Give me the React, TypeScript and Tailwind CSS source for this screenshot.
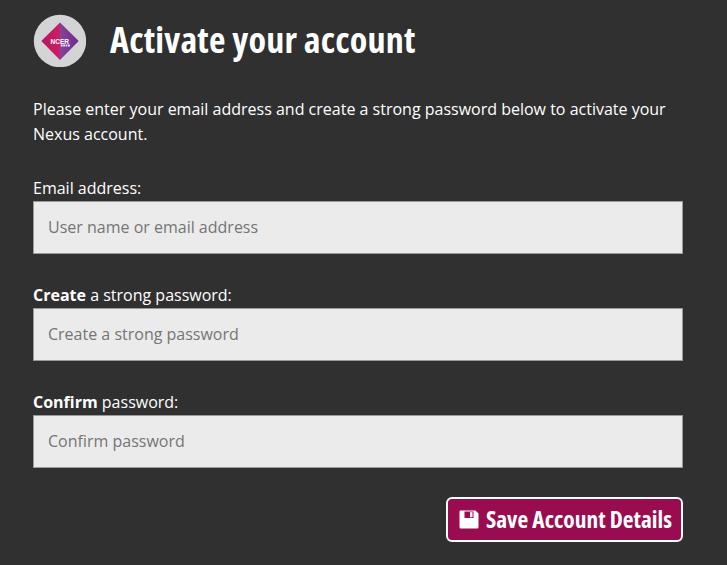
import React from "react";

const fields = [
  { id: "email", strong: "", label: "Email address:", placeholder: "User name or email address", type: "text" },
  { id: "password", strong: "Create", label: " a strong password:", placeholder: "Create a strong password", type: "password" },
  { id: "confirm", strong: "Confirm", label: " password:", placeholder: "Confirm password", type: "password" },
];

const Logo = () => (
  <svg width="53" height="53" viewBox="0 0 53 53" className="mb-0.5">
    <defs>
      <linearGradient id="pink" x1="0" x2="1">
        <stop offset="0" stopColor="#b5165c" />
        <stop offset="1" stopColor="#cb1f66" />
      </linearGradient>
      <linearGradient id="purple" x1="0" x2="1">
        <stop offset="0" stopColor="#85439b" />
        <stop offset="1" stopColor="#6c2c87" />
      </linearGradient>
    </defs>
    <circle cx="27" cy="27" r="26.2" fill="#d3d4d6" />
    <path d="M27 8.5 L8.3 27 L27 46 Z" fill="url(#pink)" />
    <path d="M27 8.5 L45.7 27 L27 46 Z" fill="url(#purple)" />
    <text
      x="17.6"
      y="29.5"
      fontSize="6.3"
      fontWeight="700"
      fontFamily="Liberation Sans, sans-serif"
      textLength="18.4"
      lengthAdjust="spacingAndGlyphs"
      fill="#fff"
    >
      NCER
    </text>
    <path d="M27.8 31.5 h9" stroke="#fff" strokeWidth="1.9" strokeDasharray="1.8 0.6" opacity="0.9" />
  </svg>
);

const SaveIcon = () => (
  <svg width="20" height="19" viewBox="0 0 20 19">
    <path
      fill="#fff"
      fillRule="evenodd"
      d="M1.5 0.5 H16.5 L19.5 3.5 V17 Q19.5 18.5 18 18.5 H2 Q0.5 18.5 0.5 17 V1.5 Q0.5 0.5 1.5 0.5 Z M5.5 1.5 V8 H14.5 V1.5 Z"
    />
    <path d="M11 2.2 h2.5 v5 h-2.5 Z" fill="#fff" />
  </svg>
);

const App = () => {
  return (
    <div className="h-[565px] w-[727px] overflow-hidden bg-[#303030] px-[33px] pt-3.5 font-['Open_Sans',sans-serif] text-base text-white">
      <div className="flex h-[54px] items-center gap-6">
        <Logo />
        <h1 className="pb-0.5 text-4xl font-bold tracking-[0.2px] [font-stretch:75%]">
          Activate your account
        </h1>
      </div>
      <p className="mt-[29px] leading-[25px]">
        Please enter your email address and create a strong password below to activate your Nexus account.
      </p>
      <form className="mt-[29px]">
        {fields.map((field) => (
          <div key={field.id} className="mb-[29px] w-[650px]">
            <label htmlFor={field.id} className="block h-[25px] leading-[25px]">
              <strong>{field.strong}</strong>
              {field.label}
            </label>
            <input
              id={field.id}
              type={field.type}
              placeholder={field.placeholder}
              className="block h-[53px] w-full border border-[#999] bg-[#ebebeb] px-3.5 pb-0.5 text-[#333] placeholder:text-[#757575]"
            />
          </div>
        ))}
        <div className="flex w-[650px] justify-end">
          <button className="flex h-[45px] w-[237px] items-center gap-[7px] rounded-md border-2 border-white bg-[#990c50] pl-[11px] text-[23.4px] font-bold whitespace-nowrap [font-stretch:75%]">
            <SaveIcon />
            Save Account Details
          </button>
        </div>
      </form>
    </div>
  );
};

export default App;
